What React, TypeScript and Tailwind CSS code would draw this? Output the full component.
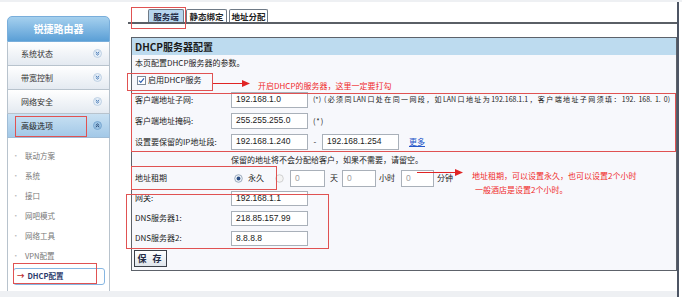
import type { ReactNode } from 'react'

const menus = ['系统状态', '带宽控制', '网络安全']
const subs = ['联动方案', '系统', '接口', '网吧模式', '网络工具', 'VPN配置']

function Chev({ up }: { up?: boolean }) {
  return (
    <svg width="9" height="9" viewBox="0 0 9 9">
      <circle cx="4.5" cy="4.5" r="4" fill={up ? '#9cc3e4' : '#e6eff8'} stroke={up ? '#6f9fcb' : '#b4c9dd'} strokeWidth="0.8" />
      <path
        d={up ? 'M2.8 4.4 L4.5 2.9 L6.2 4.4 M2.8 6.2 L4.5 4.7 L6.2 6.2' : 'M2.8 2.8 L4.5 4.3 L6.2 2.8 M2.8 4.6 L4.5 6.1 L6.2 4.6'}
        fill="none"
        stroke={up ? '#1e3f6e' : '#3a6fb0'}
        strokeWidth="0.9"
      />
    </svg>
  )
}

function Field({ value, w = 'w-[77px]', h = 'h-[16px]', muted }: { value: string; w?: string; h?: string; muted?: boolean }) {
  return (
    <div
      className={`${w} ${h} shrink-0 border border-[#a9b0b9] bg-white pl-[4px] flex items-center text-[8.5px] [font-family:'Liberation_Sans',Arial,sans-serif] ${muted ? 'text-[#a0a0a0]' : 'text-[#222]'}`}
    >
      {value}
    </div>
  )
}

function Row({ label, h, children }: { label: string; h: string; children?: ReactNode }) {
  return (
    <div className={`${h} flex items-center pl-[3px]`}>
      <span className="w-[96px] shrink-0 text-[8px] text-[#222]">{label}</span>
      {children}
    </div>
  )
}

function Radio({ on }: { on?: boolean }) {
  return (
    <svg width="9" height="9" viewBox="0 0 9 9" className="shrink-0">
      <circle cx="4.5" cy="4.5" r="3.8" fill={on ? '#eef3f8' : '#f4f4f4'} stroke={on ? '#8a9bb0' : '#c8c8c8'} strokeWidth="0.8" />
      {on && <circle cx="4.5" cy="4.5" r="1.9" fill="#2d4f86" />}
    </svg>
  )
}

function Sidebar() {
  return (
    <div className="ml-[7px] mt-[14px] w-[103px] shrink-0 flex flex-col">
      <div className="h-[26px] rounded-t-[5px] border border-[#79aedb] bg-linear-to-b from-[#a5d0ee] to-[#5a9fd6] flex items-center justify-center text-white font-bold text-[10px]">
        锐捷路由器
      </div>
      {menus.map((m) => (
        <div
          key={m}
          className="h-[24px] border-x border-b border-[#b8c3cd] bg-linear-to-b from-white to-[#e4eaf1] flex items-center justify-between pl-[13px] pr-[7px] text-[8px] text-[#333]"
        >
          {m}
          <Chev />
        </div>
      ))}
      <div className="h-[24px] border-x border-b border-[#9fbcd6] bg-linear-to-b from-[#c9e1f3] to-[#a2c8e7] flex items-center justify-between pl-[13px] pr-[7px] text-[8px] text-[#222]">
        高级选项
        <Chev up />
      </div>
      <div className="flex-1 border-x border-[#b8c3cd] bg-white pt-[8px]">
        {subs.map((s) => (
          <div key={s} className="h-[20px] flex items-center pl-[4px] text-[7.5px] text-[#777]">
            <span className="w-[13px] text-[#bbb]">•</span>
            {s}
          </div>
        ))}
        <div className="h-[20px] flex items-center pl-[5px] pr-[4px]">
          <div className="flex-1 h-[17px] rounded-[3px] border border-[#86b6e2] flex items-center pl-[3px] text-[7.5px] font-bold text-[#2b3a6b]">
            <span className="mr-[3px] text-[#c03030]">→</span>DHCP配置
          </div>
        </div>
      </div>
    </div>
  )
}

function Main() {
  return (
    <div className="ml-[18px] flex-1 min-w-0 flex flex-col">
      {/* Tabs */}
      <div className="h-[22px] flex items-end gap-[2px] pl-[20px] border-b-2 border-[#5a5f66]">
        <div className="w-[36px] h-[13px] rounded-t-[2px] border border-b-0 border-[#6f7a86] bg-[#b7d5ee] flex items-center justify-center text-[8.5px] font-bold text-[#1f2a44]">
          服务端
        </div>
        <div className="w-[41px] h-[13px] rounded-t-[2px] border border-b-0 border-[#6f7a86] bg-white flex items-center justify-center text-[8.5px] font-bold text-[#222]">
          静态绑定
        </div>
        <div className="w-[39px] h-[13px] rounded-t-[2px] border border-b-0 border-[#6f7a86] bg-white flex items-center justify-center text-[8.5px] font-bold text-[#222]">
          地址分配
        </div>
      </div>

      {/* Panel */}
      <div className="mt-[13px] ml-[3px] h-[234px] border border-[#5d626a] flex flex-col">
        <div className="h-[17px] bg-[#bddbef] flex items-center pl-[3px] text-[10px] font-bold text-[#1a1a1a]">DHCP服务器配置</div>
        <div className="flex-1 bg-[#f7f8fc] flex flex-col">
          <div className="h-[16px] flex items-center pl-[3px] text-[8px] text-[#222]">本页配置DHCP服务器的参数。</div>
          <div className="h-[18px] flex items-center pl-[5px] text-[8px] text-[#222]">
            <svg width="9" height="9" viewBox="0 0 9 9" className="mr-[2px]">
              <rect x="0.5" y="0.5" width="8" height="8" fill="#fff" stroke="#7d8a99" />
              <path d="M2 4.6 L3.8 6.4 L7 2.4" fill="none" stroke="#2a5db0" strokeWidth="1.1" />
            </svg>
            启用DHCP服务
          </div>
          <Row label="客户端地址子网:" h="h-[21px]">
            <Field value="192.168.1.0" />
            <span className="ml-[5px] w-[357px] shrink-0 block text-[7px] text-[#222] text-justify [text-align-last:justify]">
              (*) (必须同LAN口处在同一网段，如LAN口地址为192.168.1.1，客户端地址子网须填：192. 168. 1. 0)
            </span>
          </Row>
          <Row label="客户端地址掩码:" h="h-[21px]">
            <Field value="255.255.255.0" />
            <span className="ml-[5px] text-[7.5px] tracking-[0.8px] text-[#222]">(*)</span>
          </Row>
          <Row label="设置要保留的IP地址段:" h="h-[21px]">
            <Field value="192.168.1.240" />
            <span className="w-[14px] text-center text-[8px] text-[#222]">-</span>
            <Field value="192.168.1.254" />
            <span className="ml-[10px] text-[8px] text-[#2456c8] underline">更多</span>
          </Row>
          <div className="h-[16px] flex items-center pl-[99px] text-[8px] text-[#222]">保留的地址将不会分配给客户，如果不需要，请留空。</div>
          <Row label="地址租期" h="h-[20px]">
            <span className="ml-[3px]">
              <Radio on />
            </span>
            <span className="ml-[5px] text-[8px] text-[#222]">永久</span>
            <span className="ml-[11px]">
              <Radio />
            </span>
            <span className="ml-[6px]">
              <Field value="0" w="w-[35px]" h="h-[17px]" muted />
            </span>
            <span className="ml-[5px] text-[8px] text-[#222]">天</span>
            <span className="ml-[4px]">
              <Field value="0" w="w-[34px]" h="h-[17px]" muted />
            </span>
            <span className="ml-[3px] text-[8px] text-[#222]">小时</span>
            <span className="ml-[6px]">
              <Field value="0" w="w-[33px]" h="h-[17px]" muted />
            </span>
            <span className="ml-[3px] text-[8px] text-[#222]">分钟</span>
          </Row>
          <Row label="网关:" h="h-[20px]">
            <Field value="192.168.1.1" h="h-[15px]" />
          </Row>
          <Row label="DNS服务器1:" h="h-[20px]">
            <Field value="218.85.157.99" h="h-[15px]" />
          </Row>
          <Row label="DNS服务器2:" h="h-[20px]">
            <Field value="8.8.8.8" h="h-[15px]" />
          </Row>
          <div className="pl-[2px] pt-[2px]">
            <button className="w-[33px] h-[17px] border border-[#3a3f48] bg-linear-to-b from-white to-[#dfe5ec] text-[9px] font-bold text-[#1f2a44] tracking-[2px] flex items-center justify-center">
              保 存
            </button>
          </div>
        </div>
      </div>
    </div>
  )
}

function Arrow({ left, top, width }: { left: string; top: string; width: string }) {
  return (
    <div className={`absolute ${left} ${top} ${width} h-[7px] flex items-center`}>
      <div className="flex-1 h-px bg-[#e02424]" />
      <svg width="8" height="7" viewBox="0 0 8 7">
        <path d="M0 0 L8 3.5 L0 7 Z" fill="#e02424" />
      </svg>
    </div>
  )
}

export default function App() {
  return (
    <div className="relative w-[682px] h-[297px] bg-white overflow-hidden flex flex-col [font-family:'Noto_Sans_CJK_SC',sans-serif] leading-none">
      <div className="h-[2px] shrink-0 bg-[#eef0f3]" />
      <div className="flex flex-1 min-h-0">
        <div className="flex-1 min-w-0 flex flex-col">
          <div className="flex flex-1 min-h-0">
            <Sidebar />
            <Main />
          </div>
          <div className="h-[6px] shrink-0 bg-[#eef0f3]" />
        </div>
        <div className="w-[2px] bg-[#4d5564]" />
        <div className="w-[3px]" />
      </div>

      {/* annotations */}
      <div className="absolute left-[15px] top-[116px] w-[72px] h-[21px] border border-[#e05252]" />
      <div className="absolute left-[131px] top-[7px] w-[55px] h-[22px] border border-[#e05252]" />
      <div className="absolute left-[13px] top-[263px] w-[84px] h-[21px] border border-[#e05252]" />
      <div className="absolute left-[127px] top-[73px] w-[86px] h-[18px] border border-[#e05252]" />
      <div className="absolute left-[131px] top-[93px] w-[545px] h-[59px] border border-[#e05252]" />
      <div className="absolute left-[131px] top-[166px] w-[146px] h-[24px] border border-[#e05252]" />
      <div className="absolute left-[126px] top-[194px] w-[203px] h-[55px] border border-[#e05252]" />

      <Arrow left="left-[213px]" top="top-[80px]" width="w-[37px]" />
      <Arrow left="left-[417px]" top="top-[169px]" width="w-[46px]" />

      <div className="absolute left-[258px] top-[82px] text-[8px] text-[#f02a2a] whitespace-nowrap">开启DHCP的服务器，这里一定要打勾</div>
      <div className="absolute left-[472px] top-[172px] text-[8px] text-[#f02a2a] whitespace-nowrap">地址租期，可以设置永久，也可以设置2个小时</div>
      <div className="absolute left-[475px] top-[186px] text-[8px] text-[#f02a2a] whitespace-nowrap">一般酒店是设置2个小时。</div>
    </div>
  )
}
